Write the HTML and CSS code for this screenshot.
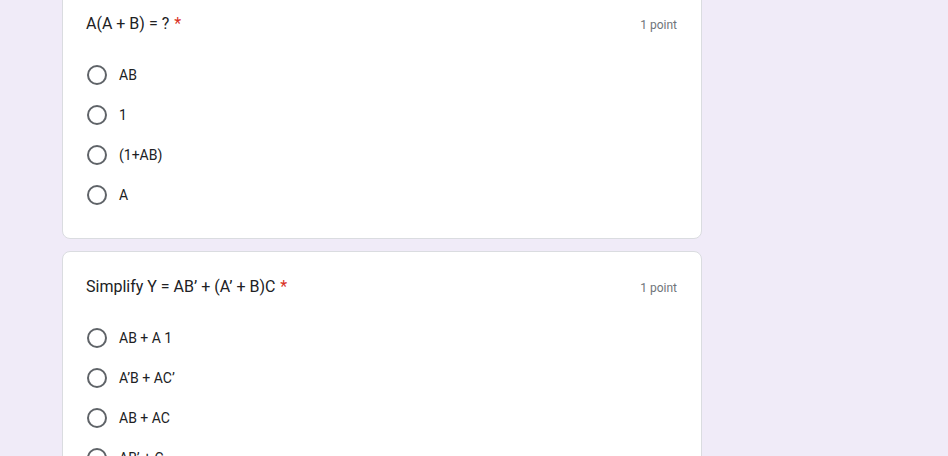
FILE: index.html
```html
<!DOCTYPE html>
<html>
<head>
<meta charset="utf-8">
<link rel="stylesheet" href="styles.css">
</head>
<body>
<div class="page">
  <div class="card first">
    <div class="head">
      <div class="title">A(A + B) = ? <span class="req">*</span></div>
      <div class="points">1 point</div>
    </div>
    <div class="options">
      <div class="opt"><span class="radio"></span><span class="label">AB</span></div>
      <div class="opt"><span class="radio"></span><span class="label">1</span></div>
      <div class="opt"><span class="radio"></span><span class="label">(1+AB)</span></div>
      <div class="opt"><span class="radio"></span><span class="label">A</span></div>
    </div>
  </div>
  <div class="card">
    <div class="head">
      <div class="title">Simplify Y = AB’ + (A’ + B)C <span class="req">*</span></div>
      <div class="points">1 point</div>
    </div>
    <div class="options">
      <div class="opt"><span class="radio"></span><span class="label">AB + A 1</span></div>
      <div class="opt"><span class="radio"></span><span class="label">A’B + AC’</span></div>
      <div class="opt"><span class="radio"></span><span class="label">AB + AC</span></div>
      <div class="opt"><span class="radio"></span><span class="label">AB’ + C</span></div>
    </div>
  </div>
</div>
</body>
</html>
```
FILE: styles.css
```css
html, body {
  margin: 0;
  padding: 0;
  background: #f0ebf8;
  overflow: hidden;
  height: 456px;
}
.page {
  margin-left: 62px;
  width: 640px;
  display: flex;
  flex-direction: column;
  gap: 12px;
  margin-top: -12px;
}
.card {
  background: #fff;
  border: 1px solid #dadce0;
  border-radius: 8px;
  padding: 23px 24px 23px 23px;
}
.head {
  display: flex;
  justify-content: space-between;
  align-items: baseline;
}
.title {
  font-family: Roboto, "Open Sans", sans-serif;
  font-size: 16px;
  line-height: 24px;
  color: #202124;
}
.req {
  color: #d93025;
  margin-left: 1px;
}
.points {
  font-family: Roboto, sans-serif;
  font-size: 12px;
  color: #70757a;
  line-height: 24px;
}
.options {
  margin-top: 18px;
  display: flex;
  flex-direction: column;
}
.opt {
  height: 40px;
  display: flex;
  align-items: center;
  font-family: Roboto, "Liberation Sans", sans-serif;
  font-size: 14px;
  color: #202124;
}
.radio {
  box-sizing: border-box;
  width: 20px;
  height: 20px;
  border: 2px solid #5f6368;
  border-radius: 50%;
  margin-left: 1px;
  margin-right: 12px;
  flex-shrink: 0;
}
```
